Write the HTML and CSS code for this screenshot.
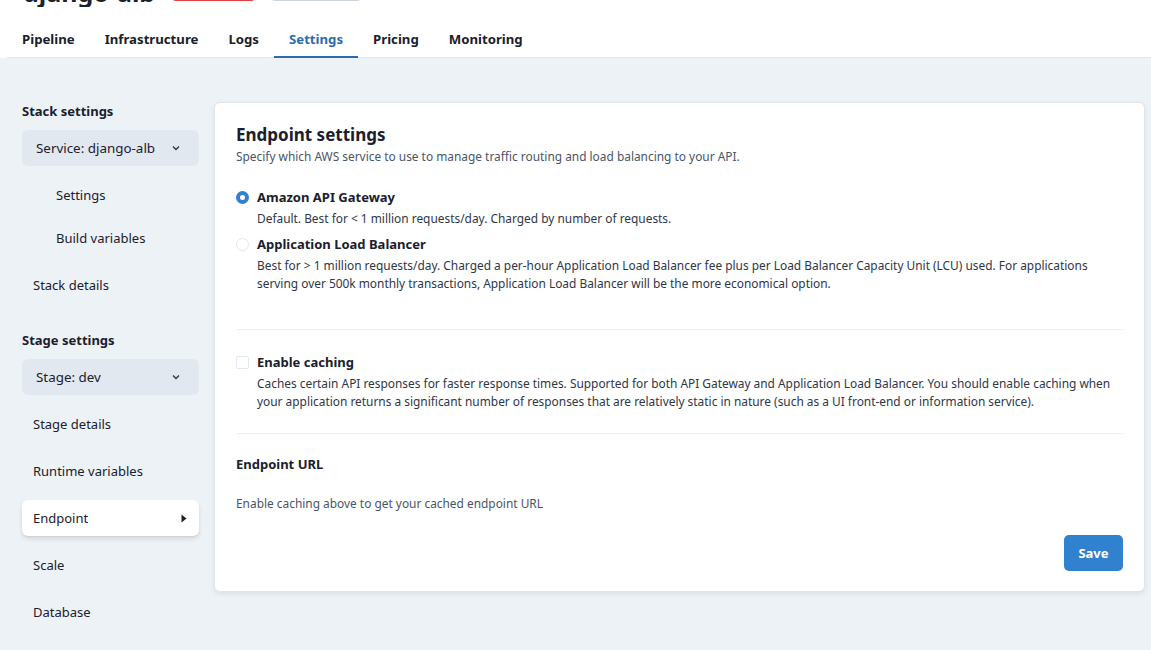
FILE: index.html
```html
<!DOCTYPE html>
<html>
<head>
<meta charset="utf-8">
<link rel="stylesheet" href="styles.css">
</head>
<body>
<header class="header">
  <div class="title-row">
    <h1 class="title">django-alb</h1>
    <span class="badge badge-red"></span>
    <span class="badge badge-gray"></span>
  </div>
  <nav class="tabs">
    <a class="tab">Pipeline</a>
    <a class="tab">Infrastructure</a>
    <a class="tab">Logs</a>
    <a class="tab active">Settings</a>
    <a class="tab">Pricing</a>
    <a class="tab">Monitoring</a>
  </nav>
</header>
<div class="page">
  <aside class="sidebar">
    <div class="side-heading">Stack settings</div>
    <div class="select"><span>Service: django-alb</span>
      <svg class="chev" width="8" height="6" viewBox="0 0 8 6"><path d="M1 1.5 L4 4.5 L7 1.5" fill="none" stroke="#2d3748" stroke-width="1.4"/></svg>
    </div>
    <div class="side-item sub">Settings</div>
    <div class="side-item sub">Build variables</div>
    <div class="side-item">Stack details</div>
    <div class="side-heading second">Stage settings</div>
    <div class="select"><span>Stage: dev</span>
      <svg class="chev" width="8" height="6" viewBox="0 0 8 6"><path d="M1 1.5 L4 4.5 L7 1.5" fill="none" stroke="#2d3748" stroke-width="1.4"/></svg>
    </div>
    <div class="side-item">Stage details</div>
    <div class="side-item">Runtime variables</div>
    <div class="side-item active"><span>Endpoint</span>
      <svg width="6" height="9" viewBox="0 0 6 9"><path d="M0.5 0.5 L5.5 4.5 L0.5 8.5 Z" fill="#1a202c"/></svg>
    </div>
    <div class="side-item">Scale</div>
    <div class="side-item">Database</div>
  </aside>
  <main class="card">
    <h2 class="card-title">Endpoint settings</h2>
    <p class="card-sub">Specify which AWS service to use to manage traffic routing and load balancing to your API.</p>
    <div class="options">
      <div class="option">
        <span class="radio checked"></span>
        <div class="option-body">
          <div class="option-label">Amazon API Gateway</div>
          <div class="option-desc">Default. Best for &lt; 1 million requests/day. Charged by number of requests.</div>
        </div>
      </div>
      <div class="option">
        <span class="radio"></span>
        <div class="option-body">
          <div class="option-label">Application Load Balancer</div>
          <div class="option-desc">Best for &gt; 1 million requests/day. Charged a per-hour Application Load Balancer fee plus per Load Balancer Capacity Unit (LCU) used. For applications serving over 500k monthly transactions, Application Load Balancer will be the more economical option.</div>
        </div>
      </div>
    </div>
    <hr class="divider first">
    <div class="option caching">
      <span class="checkbox"></span>
      <div class="option-body">
        <div class="option-label">Enable caching</div>
        <div class="option-desc">Caches certain API responses for faster response times. Supported for both API Gateway and Application Load Balancer. You should enable caching when your application returns a significant number of responses that are relatively static in nature (such as a UI front-end or information service).</div>
      </div>
    </div>
    <hr class="divider second">
    <h3 class="url-title">Endpoint URL</h3>
    <p class="url-text">Enable caching above to get your cached endpoint URL</p>
    <div class="actions"><button class="save">Save</button></div>
  </main>
</div>
</body>
</html>
```
FILE: styles.css
```css
* { box-sizing: border-box; }
html, body { margin: 0; padding: 0; }
body {
  font-family: "Noto Sans", "Open Sans", sans-serif;
  color: #1a202c;
  background: #edf2f7;
  font-size: 11.9px;
  height: 650px;
  overflow: hidden;
}
.header {
  background: #fff;
  padding: 0 0 0 7px;
}
.title-row {
  display: flex;
  align-items: flex-end;
  gap: 17px;
  height: 36px;
  margin-top: -29px;
  padding-left: 16px;
  overflow: hidden;
}
.title {
  margin: 0;
  font-size: 25px;
  font-weight: 700;
  line-height: 30px;
}
.badge {
  display: block;
  width: 83px;
  height: 24px;
  border-radius: 4px;
  margin-bottom: 6px;
}
.badge-red { background: #e53e3e; }
.badge-gray { background: #cbd5e0; width: 90px; margin-left: -1px; }
.tabs {
  display: flex;
  border-bottom: 1px solid #e2e8f0;
  margin-top: 22px;
}
.tab {
  padding: 2px 15px 0;
  font-size: 13.2px;
  font-weight: 700;
  line-height: 16px;
  height: 29px;
  color: #1a202c;
  border-bottom: 2px solid transparent;
  margin-bottom: -1px;
}
.tab.active { color: #2b6cb0; border-bottom-color: #2b6cb0; }
.page {
  display: flex;
  align-items: flex-start;
  padding: 44px 6px 0 22px;
  gap: 15px;
}
.sidebar {
  width: 177px;
  flex: none;
  display: flex;
  flex-direction: column;
}
.side-heading {
  font-weight: 700;
  font-size: 13px;
  line-height: 18px;
  margin-bottom: 10px;
}
.side-heading.second { margin-top: 28px; }
.select {
  display: flex;
  justify-content: space-between;
  align-items: center;
  height: 36px;
  background: #e2e8f0;
  border-radius: 6px;
  padding: 0 19px 0 14px;
  font-size: 13.4px;
  color: #1a202c;
}
.side-item {
  display: flex;
  justify-content: space-between;
  align-items: center;
  height: 36px;
  margin-top: 11px;
  padding: 0 12px 0 11px;
  font-size: 13px;
  color: #1a202c;
  border-radius: 6px;
}
.side-item.sub { padding-left: 34px; }
.side-item.sub + .side-item.sub { margin-top: 7px; }
.side-item.active {
  background: #fff;
  box-shadow: 0 3px 5px rgba(0,0,0,0.1), 0 1px 2px rgba(0,0,0,0.06);
}
.card {
  flex: 1;
  background: #fff;
  border: 1px solid #dfe5ec;
  border-radius: 6px;
  box-shadow: 0 2px 5px rgba(0,0,0,0.08);
  padding: 20px 21px 20px 21px;
  height: 490px;
}
.card-title {
  margin: 0;
  font-size: 17px;
  font-weight: 700;
  line-height: 24px;
}
.card-sub {
  margin: 0;
  color: #4a5568;
  line-height: 18px;
}
.options { margin-top: 21px; display: flex; flex-direction: column; gap: 6px; }
.option { display: flex; gap: 8px; }
.option-label { font-weight: 700; font-size: 13px; line-height: 23px; }
.option-desc { color: #2d3748; line-height: 18px; }
.radio {
  width: 13px; height: 13px; border-radius: 50%;
  border: 1px solid #e2e8f0;
  margin-top: 5px;
  flex: none;
}
.radio.checked { border: 4px solid #3182ce; background: #fff; }
.checkbox {
  width: 13px; height: 13px; border-radius: 2px;
  border: 1px solid #e2e8f0;
  margin-top: 5px;
  flex: none;
}
.divider { border: 0; border-top: 1px solid #edf2f7; margin: 0; }
.divider.first { margin-top: 37px; }
.divider.second { margin-top: 23px; }
.caching { margin-top: 21px; }
.url-title { margin: 21px 0 0; font-size: 13px; font-weight: 700; line-height: 18px; }
.url-text { margin: 21px 0 0; color: #4a5568; line-height: 18px; }
.actions { display: flex; justify-content: flex-end; margin-top: 23px; }
.save {
  background: #3182ce;
  color: #fff;
  border: 0;
  border-radius: 5px;
  height: 36px;
  width: 59px;
  font-family: inherit;
  font-weight: 700;
  font-size: 13px;
}
```
